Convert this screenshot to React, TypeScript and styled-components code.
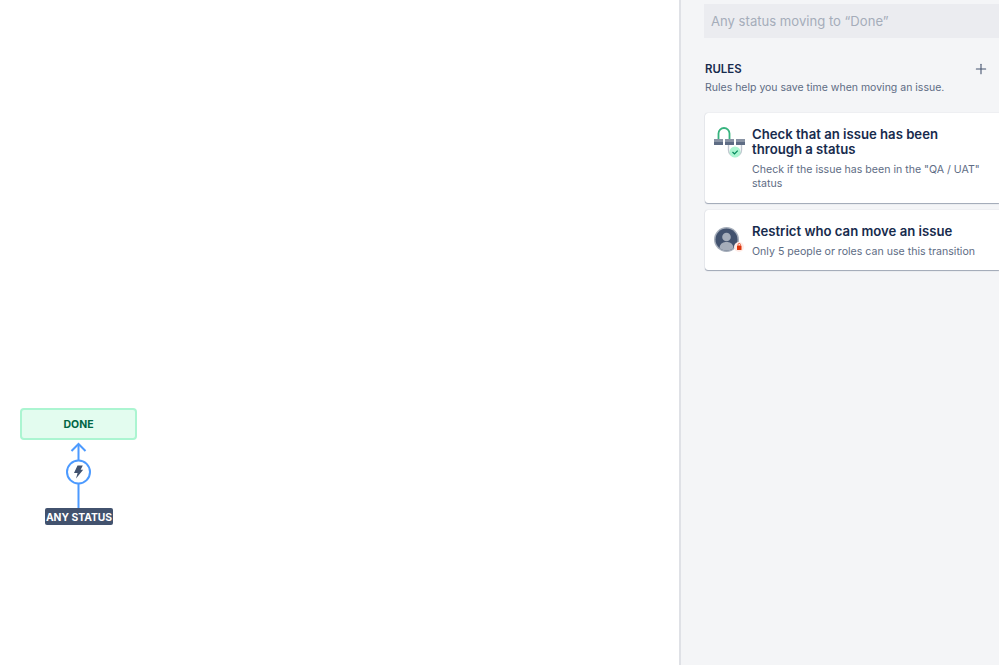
import React from 'react';
import styled, { createGlobalStyle } from 'styled-components';
import { Plus } from 'lucide-react';

const GlobalStyle = createGlobalStyle`
  html, body {
    margin: 0;
    padding: 0;
    background: #ffffff;
    font-family: Inter, "Liberation Sans", sans-serif;
    overflow: hidden;
  }
`;

const Page = styled.div`
  display: flex;
  width: 999px;
  height: 665px;
  overflow: hidden;
`;

const Canvas = styled.div`
  position: relative;
  flex: 0 0 679px;
  background: #ffffff;
`;

const StatusNode = styled.div`
  position: absolute;
  left: 20px;
  top: 408px;
  width: 117px;
  height: 32px;
  box-sizing: border-box;
  display: flex;
  align-items: center;
  justify-content: center;
  background: #e3fcef;
  border: 2px solid #abf5d1;
  border-radius: 4px;
  color: #006644;
  font-size: 10.5px;
  font-weight: 700;
`;

const Connector = styled.svg`
  position: absolute;
  left: 62px;
  top: 441px;
`;

const SourceLabel = styled.div`
  position: absolute;
  left: 45px;
  top: 508px;
  width: 68px;
  height: 17px;
  box-sizing: border-box;
  padding-top: 1px;
  display: flex;
  align-items: center;
  justify-content: center;
  background: #42526e;
  border-radius: 2px;
  color: #ffffff;
  font-size: 10.3px;
  font-weight: 700;
  white-space: nowrap;
`;

const Sidebar = styled.aside`
  flex: 1;
  box-sizing: border-box;
  padding: 4px 0 0 23px;
  background: #f4f5f7;
  border-left: 2px solid #dfe1e6;
  min-width: 0;
`;

const DisabledInput = styled.div`
  height: 34px;
  box-sizing: border-box;
  padding: 0 7px;
  display: flex;
  align-items: center;
  background: #ebecf0;
  color: #a5adba;
  font-size: 13.1px;
`;

const SectionHeader = styled.div`
  display: flex;
  align-items: center;
  justify-content: space-between;
  margin-top: 22px;
  padding: 1px 10px 0 1px;
  height: 16px;
  box-sizing: border-box;
`;

const SectionTitle = styled.h2`
  margin: 0;
  color: #172b4d;
  font-size: 11.4px;
  font-weight: 600;
`;

const AddIcon = styled(Plus)`
  color: #42526e;
`;

const SectionHint = styled.p`
  margin: 4px 0 0 1px;
  color: #5e6c84;
  font-size: 10.5px;
  line-height: 16px;
`;

const RuleList = styled.div`
  display: flex;
  flex-direction: column;
  gap: 7px;
  margin: 17px 0 0 1px;
`;

const RuleCard = styled.div<{ $height: number }>`
  display: flex;
  gap: 5px;
  box-sizing: border-box;
  height: ${props => props.$height}px;
  padding: 14px 10px 0 9px;
  background: #ffffff;
  border-radius: 3px 0 0 3px;
  box-shadow: 0 1px 1px rgba(9, 30, 66, 0.35), 0 0 1px rgba(9, 30, 66, 0.25);
`;

const RuleIcon = styled.svg`
  flex: 0 0 auto;
`;

const RuleBody = styled.div`
  min-width: 0;
`;

const RuleTitle = styled.div`
  color: #172b4d;
  font-size: 13.15px;
  font-weight: 600;
  line-height: 15px;
`;

const RuleText = styled.div`
  margin-top: 6px;
  color: #5e6c84;
  font-size: 10.6px;
  line-height: 14px;
`;

const StatusPathIcon = () => (
  <RuleIcon width="33" height="34" viewBox="0 0 33 34">
    <path d="M4.5 12 V6.5 a5.5 5.5 0 0 1 11 0 V12" fill="none" stroke="#36b37e" strokeWidth="1.8" />
    <path d="M14.5 18 V23 a6.5 6.5 0 0 0 13 0 V18" fill="none" stroke="#c1c7d0" strokeWidth="1.4" />
    <rect x="0" y="12" width="9" height="3" fill="#8993a4" />
    <rect x="0" y="15" width="9" height="3" fill="#5e6c84" />
    <rect x="11" y="12" width="9" height="3" fill="#8993a4" />
    <rect x="11" y="15" width="9" height="3" fill="#5e6c84" />
    <rect x="22" y="12" width="9" height="3" fill="#8993a4" />
    <rect x="22" y="15" width="9" height="3" fill="#5e6c84" />
    <circle cx="21" cy="25" r="5.5" fill="#abf5d1" />
    <path d="M18.5 25 l2 2 l3.2 -3.4" fill="none" stroke="#00875a" strokeWidth="1.2" />
  </RuleIcon>
);

const RestrictedUserIcon = () => (
  <RuleIcon width="33" height="30" viewBox="0 0 33 30">
    <defs>
      <clipPath id="avatar-clip">
        <circle cx="12.5" cy="15.5" r="11" />
      </clipPath>
    </defs>
    <circle cx="12.5" cy="15.5" r="12.5" fill="#a5adba" />
    <circle cx="12.5" cy="15.5" r="11" fill="#42526e" />
    <g clipPath="url(#avatar-clip)">
      <circle cx="12.5" cy="13" r="4.3" fill="#a5adba" />
      <rect x="5.5" y="18" width="14" height="12" rx="6" fill="#a5adba" />
    </g>
    <circle cx="25" cy="23" r="5" fill="#ffebe6" />
    <rect x="23" y="21.5" width="4.5" height="4.5" rx="0.5" fill="#de350b" />
    <path d="M24 21.5 v-0.8 a1.25 1.25 0 0 1 2.5 0 v0.8" fill="none" stroke="#de350b" strokeWidth="0.7" />
  </RuleIcon>
);

const App: React.FC = () => (
  <Page>
    <GlobalStyle />
    <Canvas>
      <StatusNode>DONE</StatusNode>
      <Connector width="33" height="68" viewBox="0 0 33 68">
        <path d="M16.5 3 V19 M16.5 43 V67" stroke="#4c9aff" strokeWidth="2" fill="none" />
        <path d="M9.5 10 L16.5 3 L23.5 10" stroke="#4c9aff" strokeWidth="2" fill="none" />
        <circle cx="16.5" cy="31" r="11.5" fill="#ffffff" stroke="#4c9aff" strokeWidth="2" />
        <path d="M15.5 24.5 H20.8 L18.6 28.7 H21.2 L14 37.5 L15.6 32 H12 Z" fill="#42526e" />
      </Connector>
      <SourceLabel>ANY STATUS</SourceLabel>
    </Canvas>
    <Sidebar>
      <DisabledInput>Any status moving to “Done”</DisabledInput>
      <SectionHeader>
        <SectionTitle>RULES</SectionTitle>
        <AddIcon size={16} strokeWidth={1.6} />
      </SectionHeader>
      <SectionHint>Rules help you save time when moving an issue.</SectionHint>
      <RuleList>
        <RuleCard $height={90}>
          <StatusPathIcon />
          <RuleBody>
            <RuleTitle>Check that an issue has been through a status</RuleTitle>
            <RuleText>Check if the issue has been in the "QA / UAT" status</RuleText>
          </RuleBody>
        </RuleCard>
        <RuleCard $height={60}>
          <RestrictedUserIcon />
          <RuleBody>
            <RuleTitle>Restrict who can move an issue</RuleTitle>
            <RuleText>Only 5 people or roles can use this transition</RuleText>
          </RuleBody>
        </RuleCard>
      </RuleList>
    </Sidebar>
  </Page>
);

export default App;
